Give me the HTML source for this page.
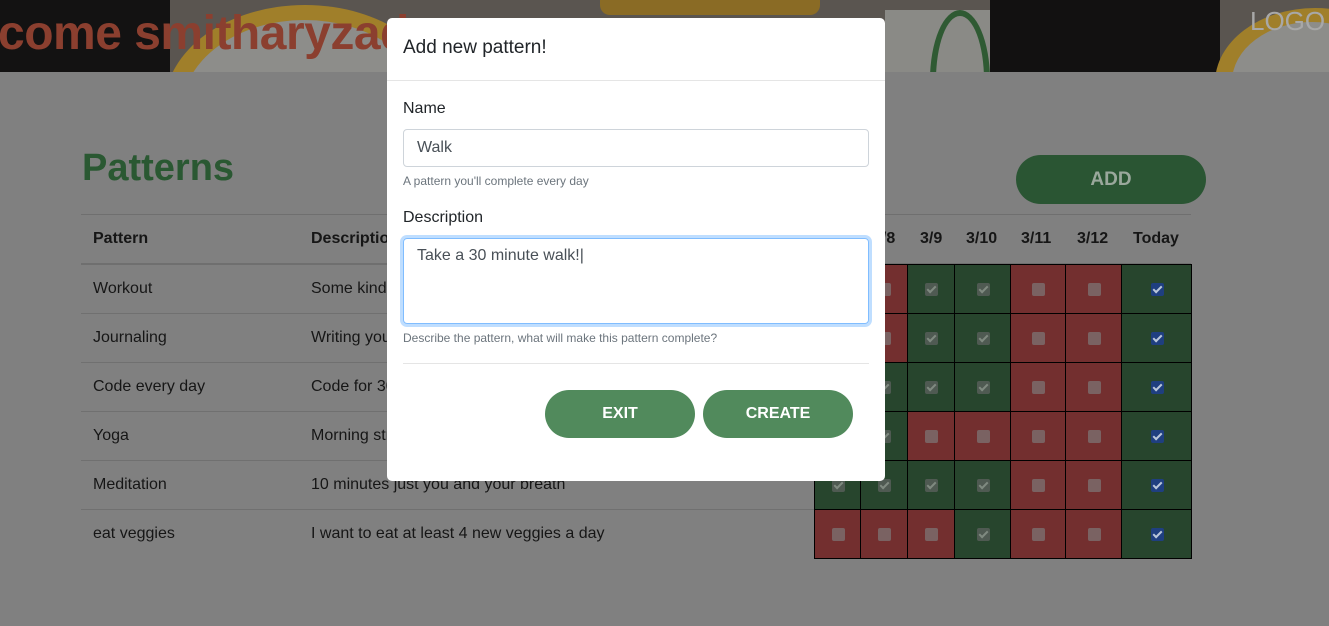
<!DOCTYPE html>
<html><head><meta charset="utf-8"><style>
*{box-sizing:border-box;margin:0;padding:0}
body{width:1329px;height:626px;overflow:hidden;background:#808080;font-family:"Liberation Sans",Arial,sans-serif;position:relative}
.a{position:absolute}
.hdr{left:0;top:0;width:1329px;height:72px;background:#5a5550;overflow:hidden}
.t{font-size:16px;color:#161616}
.th{font-size:16px;font-weight:bold;color:#161616}
.c{position:absolute;border:1px solid #000}
.g{background:#27452d}.r{background:#732f2f}
.cb{position:absolute;left:50%;top:50%;width:13px;height:13px;margin:-6px 0 0 -6px;border-radius:2px}
.r .cb{background:#7a6262}.g .cb{background:#4f5a52}
.cb.k::after{content:"";position:absolute;left:4px;top:1px;width:3px;height:7px;border:solid #7f8a80;border-width:0 2px 2px 0;transform:rotate(45deg)}
.cb.b{background:#1f3f80}.cb.b::after{border-color:#b9c6da}
.modal{left:387px;top:18px;width:498px;height:463px;background:#fff;border-radius:5px}
.lab{font-size:16px;color:#212529}
.inp{border:1px solid #ced4da;border-radius:4px;font-size:16px;color:#495057;padding-left:13px}
.help{font-size:12px;color:#6c757d}
.btn{background:#518a5c;color:#fff;font-weight:bold;font-size:16px;border-radius:24px;text-align:center;line-height:48px;height:48px;width:150px}
</style></head><body>
<div class="a hdr">
 <div class="a" style="left:0;top:0;width:170px;height:72px;background:#131212"></div>
 <div class="a" style="left:165px;top:5px;width:280px;height:200px;border-radius:50%;background:#a07f2a"></div>
 <div class="a" style="left:182px;top:20px;width:245px;height:180px;border-radius:50%;background:#8d8d8a"></div>
 <div class="a" style="left:600px;top:0;width:220px;height:15px;background:#8a6b25;border-radius:0 0 10px 10px"></div>
 <div class="a" style="left:885px;top:10px;width:120px;height:62px;background:#8a8a86"></div>
 <div class="a" style="left:930px;top:10px;width:60px;height:140px;border-radius:50%;border:6px solid #2f5a33"></div>
 <div class="a" style="left:990px;top:0;width:230px;height:72px;background:#121111"></div>
 <div class="a" style="left:1215px;top:8px;width:200px;height:150px;border-radius:50%;background:#a07f2a"></div>
 <div class="a" style="left:1232px;top:22px;width:160px;height:120px;border-radius:50%;background:#8d8d8a"></div>
 <div class="a" style="left:1250px;top:6px;font-size:26px;color:#a8a8a8">LOGO</div>
 <div class="a" style="left:-2px;top:6px;font-size:48px;font-weight:bold;color:#8b3f2f;letter-spacing:-0.5px">come smitharyzad</div>
</div>
<div class="a" style="left:82px;top:147px;font-size:38px;font-weight:bold;color:#2a5832">Patterns</div>
<div class="a" style="left:1016px;top:155px;width:190px;height:49px;border-radius:25px;background:#2a5533;color:#9aa89c;font-weight:bold;font-size:19px;text-align:center;line-height:49px">ADD</div>
<div class="a" style="left:81px;top:214px;width:1110px;height:1px;background:#6f6f6f"></div>
<div class="a" style="left:81px;top:263px;width:1110px;height:2px;background:#6f6f6f"></div>
<div class="a th" style="left:93px;top:230px">Pattern</div>
<div class="a th" style="left:311px;top:230px">Description</div>
<div class="a th" style="left:873px;top:230px">3/8</div>
<div class="a th" style="left:920px;top:230px">3/9</div>
<div class="a th" style="left:966px;top:230px">3/10</div>
<div class="a th" style="left:1021px;top:230px">3/11</div>
<div class="a th" style="left:1077px;top:230px">3/12</div>
<div class="a th" style="left:1133px;top:230px">Today</div>
<div class="a" style="left:81px;top:313px;width:733px;height:1px;background:#707070"></div>
<div class="a" style="left:81px;top:362px;width:733px;height:1px;background:#707070"></div>
<div class="a" style="left:81px;top:411px;width:733px;height:1px;background:#707070"></div>
<div class="a" style="left:81px;top:460px;width:733px;height:1px;background:#707070"></div>
<div class="a" style="left:81px;top:509px;width:733px;height:1px;background:#707070"></div>
<div class="a t" style="left:93px;top:280px">Workout</div><div class="a t" style="left:311px;top:280px">Some kind of workout</div>
<div class="a t" style="left:93px;top:329px">Journaling</div><div class="a t" style="left:311px;top:329px">Writing your thoughts</div>
<div class="a t" style="left:93px;top:378px">Code every day</div><div class="a t" style="left:311px;top:378px">Code for 30 minutes</div>
<div class="a t" style="left:93px;top:427px">Yoga</div><div class="a t" style="left:311px;top:427px">Morning stretch</div>
<div class="a t" style="left:93px;top:476px">Meditation</div><div class="a t" style="left:311px;top:476px">10 minutes just you and your breath</div>
<div class="a t" style="left:93px;top:525px">eat veggies</div><div class="a t" style="left:311px;top:525px">I want to eat at least 4 new veggies a day</div>
<div id="grid"></div>
<script>
var xs=[814,860,907,954,1010,1065,1121,1191],ys=[264,313,362,411,460,509,558];
var d=["grggrrg","grggrrg","ggggrrg","ggrrrrg","ggggrrg","rrrgrrg"],h="";
for(var i=0;i<6;i++)for(var j=0;j<7;j++){var c=d[i][j];var k=j==6?"cb k b":(c=="g"?"cb k":"cb");
h+='<div class="c '+c+'" style="left:'+xs[j]+'px;top:'+ys[i]+'px;width:'+(xs[j+1]-xs[j]+1)+'px;height:50px"><div class="'+k+'"></div></div>';}
document.getElementById("grid").innerHTML=h;
</script>
<div class="a modal">
 <div class="a" style="left:16px;top:19px;font-size:19px;color:#212529">Add new pattern!</div>
 <div class="a" style="left:0;top:62px;width:498px;height:1px;background:#e5e5e5"></div>
 <div class="a lab" style="left:16px;top:82px">Name</div>
 <div class="a inp" style="left:16px;top:111px;width:466px;height:38px;line-height:36px">Walk</div>
 <div class="a help" style="left:16px;top:156px">A pattern you'll complete every day</div>
 <div class="a lab" style="left:16px;top:191px">Description</div>
 <div class="a inp" style="left:16px;top:220px;width:466px;height:86px;border-color:#80bdff;box-shadow:0 0 0 3px rgba(0,123,255,.25);padding-top:8px">Take a 30 minute walk!|</div>
 <div class="a help" style="left:16px;top:313px">Describe the pattern, what will make this pattern complete?</div>
 <div class="a" style="left:16px;top:345px;width:466px;height:1px;background:#e5e5e5"></div>
 <div class="a btn" style="left:158px;top:372px">EXIT</div>
 <div class="a btn" style="left:316px;top:372px">CREATE</div>
</div>
</body></html>
